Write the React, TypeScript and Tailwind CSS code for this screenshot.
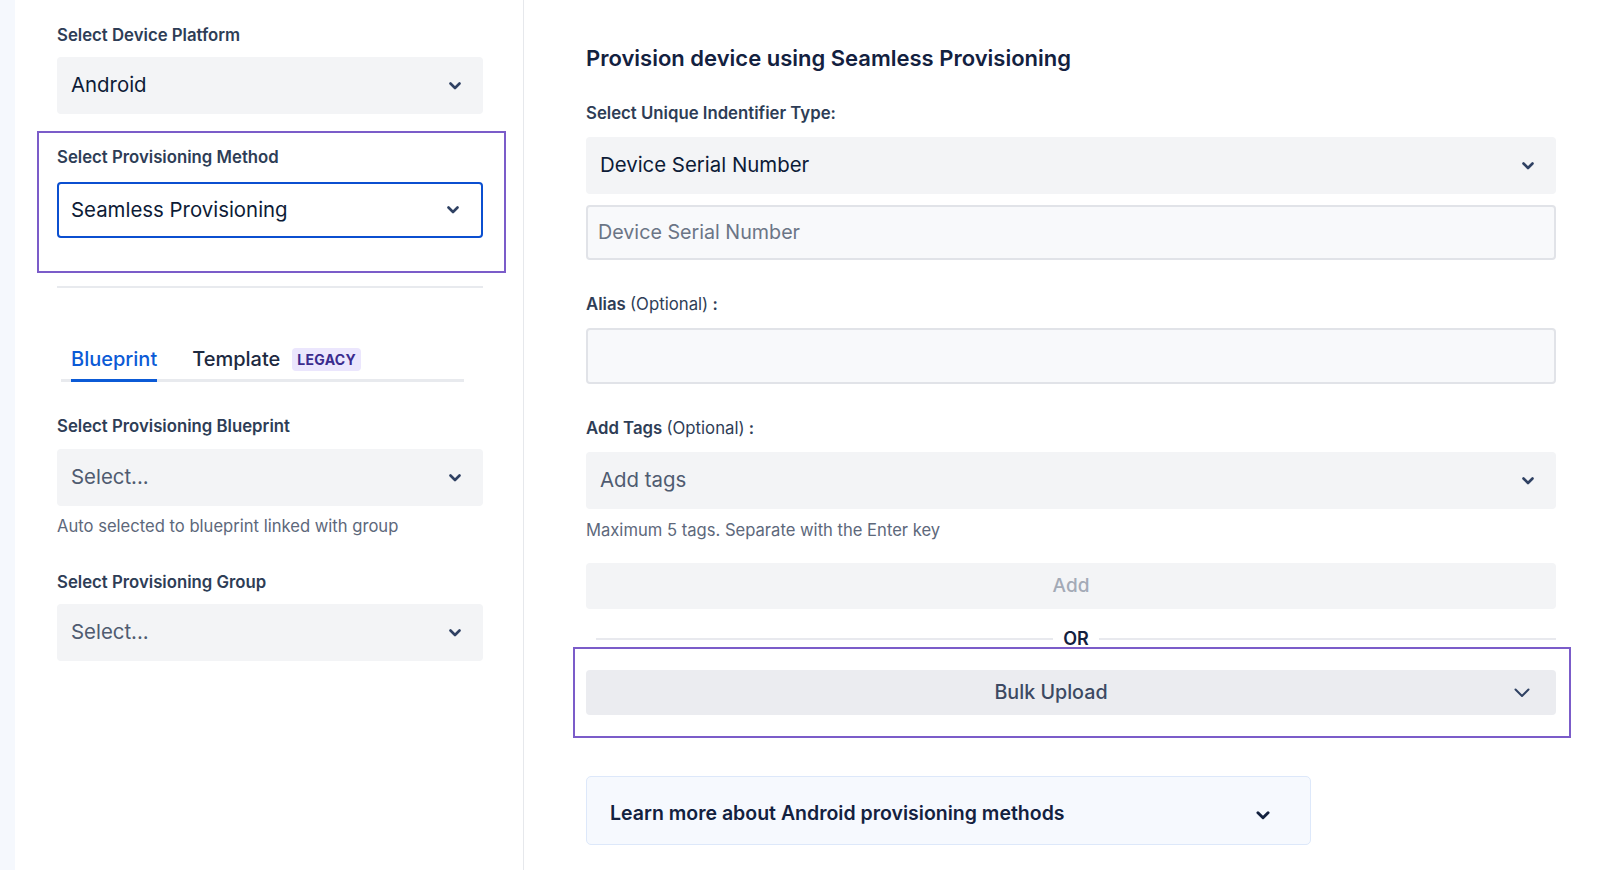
import React from 'react';

const FONT = "font-['Inter','Liberation_Sans',sans-serif]";

function Chevron({ className = '' }: { className?: string }) {
  return (
    <svg viewBox="0 0 12 8" className={className} fill="none" stroke="currentColor" strokeWidth={2.6} strokeLinecap="round" strokeLinejoin="round">
      <path d="M1.5 1.5L6 6l4.5-4.5" />
    </svg>
  );
}

function Label({ children, className = '' }: { children: React.ReactNode; className?: string }) {
  return <p className={`text-[16.75px] font-semibold leading-6 text-[#2e3d56] ${className}`}>{children}</p>;
}

function SelectBox({ value, placeholder, focused }: { value: string; placeholder?: boolean; focused?: boolean }) {
  return (
    <div
      className={`flex items-center justify-between rounded-[4px] pr-[22px] ${
        focused ? 'h-[56px] border-2 border-[#0b4fd0] bg-white pl-[12px]' : 'h-[57px] bg-[#f3f4f6] pl-[14px]'
      }`}
    >
      <span className={`text-[20.4px] ${placeholder ? 'text-[#4f5b70]' : 'text-[#0d1b36]'}`}>{value}</span>
      <Chevron className="h-[8px] w-[12px] text-[#2f4163]" />
    </div>
  );
}

function LeftPanel() {
  return (
    <aside className="w-[509px] shrink-0 border-r border-[#e6e8ec] bg-white pl-[42px] pr-[40px] pt-[23px]">
      <Label className="mb-[10px]">Select Device Platform</Label>
      <SelectBox value="Android" />

      <div className="-ml-[20px] -mr-[23px] mt-[17px] border-2 border-[#7b5cc9] pb-[33px] pl-[18px] pr-[21px] pt-[12px]">
        <Label className="mb-[13px]">Select Provisioning Method</Label>
        <SelectBox value="Seamless Provisioning" focused />
      </div>

      <div className="mt-[13px] h-[2px] bg-[#e8eaee]" />

      <div className="ml-[4px] mt-[57px] w-[403px] border-b-[3px] border-[#e8eaee]">
        <div className="flex gap-[35px] pl-[10px]">
          <div className="-mb-[3px] border-b-[3px] border-[#0b5ad6] pb-[6px] text-[20px] font-medium leading-7 text-[#0b5ad6]">Blueprint</div>
          <div className="-mb-[3px] flex items-center gap-[12px] border-b-[3px] border-transparent pb-[6px]">
            <span className="text-[20px] font-medium leading-7 text-[#1c2940]">Template</span>
            <span className="rounded-[4px] bg-[#ebe6fd] px-[5px] py-[2px] text-[14px] font-bold leading-[19px] tracking-[0.02em] text-[#3a2b8e]">LEGACY</span>
          </div>
        </div>
      </div>

      <Label className="mb-[11px] mt-[32px]">Select Provisioning Blueprint</Label>
      <SelectBox value="Select..." placeholder />
      <p className="mt-[10px] text-[16.6px] leading-5 text-[#5d687b]">Auto selected to blueprint linked with group</p>

      <Label className="mb-[10px] mt-[34px]">Select Provisioning Group</Label>
      <SelectBox value="Select..." placeholder />
    </aside>
  );
}

function RightPanel() {
  return (
    <main className="flex-1 bg-white pl-[62px] pr-[44px] pt-[44px]">
      <h1 className="text-[22px] font-semibold leading-7 text-[#13213f]">Provision device using Seamless Provisioning</h1>

      <Label className="mb-[12px] mt-[29px]">Select Unique Indentifier Type:</Label>
      <SelectBox value="Device Serial Number" />
      <div className="mt-[11px] flex h-[55px] items-center rounded-[4px] border-2 border-[#e1e3e8] bg-[#f8f9fb] px-[10px]">
        <span className="text-[19.7px] text-[#6b7586]">Device Serial Number</span>
      </div>

      <Label className="mb-[12px] mt-[32px]">
        Alias <span className="font-normal">(Optional)</span> :
      </Label>
      <div className="h-[56px] rounded-[4px] border-2 border-[#e1e3e8] bg-[#f8f9fb]" />

      <Label className="mb-[12px] mt-[32px]">
        Add Tags <span className="font-normal">(Optional)</span> :
      </Label>
      <SelectBox value="Add tags" placeholder />
      <p className="mt-[11px] text-[16.6px] leading-5 text-[#5d687b]">Maximum 5 tags. Separate with the Enter key</p>

      <div className="mt-[23px] flex h-[46px] items-center justify-center rounded-[4px] bg-[#f3f4f6] text-[19px] font-medium text-[#a3aab6]">Add</div>

      <div className="mt-[20px] flex items-center gap-[10px] pl-[10px]">
        <div className="h-[2px] flex-1 bg-[#e8e9ee]" />
        <span className="text-[18px] font-semibold leading-5 text-[#13213f]">OR</span>
        <div className="h-[2px] flex-1 bg-[#e8e9ee]" />
      </div>

      <div className="-ml-[13px] -mr-[15px] -mt-[2px] border-2 border-[#7b5cc9] py-[21px] pl-[11px] pr-[13px]">
        <div className="relative flex h-[45px] items-center justify-center rounded-[4px] bg-[#ebecf0] pr-[40px]">
          <span className="text-[19.7px] font-medium text-[#3c4962]">Bulk Upload</span>
          <svg viewBox="0 0 16 10" className="absolute right-[26px] h-[10px] w-[16px] text-[#2f4163]" fill="none" stroke="currentColor" strokeWidth={2} strokeLinecap="round" strokeLinejoin="round">
            <path d="M1.5 1.5L8 8l6.5-6.5" />
          </svg>
        </div>
      </div>

      <div className="mt-[38px] flex h-[69px] w-[725px] items-center justify-between rounded-[5px] border-[1.5px] border-[#dde8fa] bg-[#f6f9fe] pl-[23px] pr-[40px] pt-[6px]">
        <span className="text-[19.5px] font-semibold text-[#13213f]">Learn more about Android provisioning methods</span>
        <Chevron className="mt-[4px] h-[9px] w-[14px] text-[#13213f]" />
      </div>
    </main>
  );
}

export default function App() {
  return (
    <div className={`${FONT} flex h-[870px] w-[1600px] overflow-hidden bg-white`}>
      <div className="w-[15px] shrink-0 bg-[#f5f8fd]" />
      <LeftPanel />
      <RightPanel />
    </div>
  );
}
